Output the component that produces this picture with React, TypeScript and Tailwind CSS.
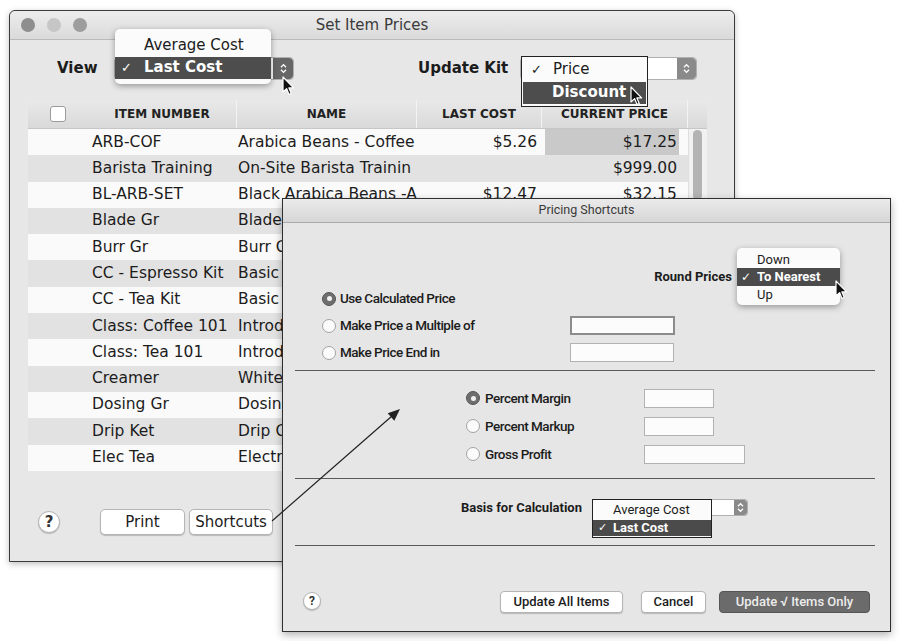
import React from 'react';

type Row = { num: string; name: string; cost: string; price: string };

const rows: Row[] = [
  { num: 'ARB-COF', name: 'Arabica Beans - Coffee', cost: '$5.26', price: '$17.25' },
  { num: 'Barista Training', name: 'On-Site Barista Trainin', cost: '', price: '$999.00' },
  { num: 'BL-ARB-SET', name: 'Black Arabica Beans -A', cost: '$12.47', price: '$32.15' },
  { num: 'Blade Gr', name: 'Blade Grinder', cost: '', price: '' },
  { num: 'Burr Gr', name: 'Burr Grinder', cost: '', price: '' },
  { num: 'CC - Espresso Kit', name: 'Basic Espresso', cost: '', price: '' },
  { num: 'CC - Tea Kit', name: 'Basic Tea Kit', cost: '', price: '' },
  { num: 'Class: Coffee 101', name: 'Introduction', cost: '', price: '' },
  { num: 'Class: Tea 101', name: 'Introduction', cost: '', price: '' },
  { num: 'Creamer', name: 'White Creamer', cost: '', price: '' },
  { num: 'Dosing Gr', name: 'Dosing Grinder', cost: '', price: '' },
  { num: 'Drip Ket', name: 'Drip Coffee Kettle', cost: '', price: '' },
  { num: 'Elec Tea', name: 'Electric Tea Kettle', cost: '', price: '' },
];

const Cursor = ({ className }: { className: string }) => (
  <svg className={`absolute pointer-events-none ${className}`} width="13" height="20" viewBox="0 0 13 20">
    <path
      d="M1 1 L1 16 L4.6 12.6 L7 18.4 L9.3 17.5 L6.9 11.9 L11.6 11.9 Z"
      fill="#111"
      stroke="#fff"
      strokeWidth="1.2"
      strokeLinejoin="round"
    />
  </svg>
);

const Stepper = ({ className }: { className: string }) => (
  <div className={`flex items-center justify-center ${className}`}>
    <svg width="7" height="11" viewBox="0 0 7 11">
      <path d="M1 4.2 L3.5 1.6 L6 4.2 M1 6.8 L3.5 9.4 L6 6.8" stroke="#fff" strokeWidth="1.3" fill="none" />
    </svg>
  </div>
);

const Radio = ({ on }: { on?: boolean }) =>
  on ? (
    <div className="w-[14px] h-[14px] rounded-full bg-[#6e6e6e] border border-[#555] flex items-center justify-center shrink-0">
      <div className="w-[5px] h-[5px] rounded-full bg-[#f2f2f2]" />
    </div>
  ) : (
    <div className="w-[14px] h-[14px] rounded-full bg-[#fbfbfb] border border-[#a2a2a2] shrink-0" />
  );

const HelpButton = ({ className }: { className: string }) => (
  <div
    className={`rounded-full bg-white border border-[#b4b4b4] shadow-[0_1px_1px_rgba(0,0,0,0.2)] flex items-center justify-center font-bold text-[#333] shrink-0 ${className}`}
  >
    ?
  </div>
);

function MainWindow() {
  return (
    <div className="absolute left-[9px] top-[10px] w-[726px] h-[552px] border border-[#3b3b3b] bg-[#e7e7e7] rounded-t-[6px] font-['DejaVu_Sans',sans-serif] text-[#1c1c1c] shadow-[0_2px_6px_rgba(0,0,0,0.25)]">
      {/* title bar */}
      <div className="h-[29px] flex items-center border-b border-[#bababa] bg-linear-to-b from-[#ededed] to-[#dadada] rounded-t-[6px]">
        <div className="w-[100px] flex items-center gap-[12px] pl-[11px]">
          <div className="w-[14px] h-[14px] rounded-full bg-[#8e8e8e]" />
          <div className="w-[14px] h-[14px] rounded-full bg-[#c6c6c6]" />
          <div className="w-[14px] h-[14px] rounded-full bg-[#9d9d9d]" />
        </div>
        <div className="flex-1 text-center text-[15px] text-[#3a3a3a]">Set Item Prices</div>
        <div className="w-[100px]" />
      </div>

      {/* controls */}
      <div className="h-[56px] flex items-center pl-[47px]">
        <div className="w-[57px] text-[15px] font-bold">View</div>
        <div className="relative w-[180px] h-[23px] bg-white border border-[#b0b0b0] rounded-[4px] flex justify-end">
          <Stepper className="w-[20px] h-full bg-[#666] rounded-r-[4px]" />
          <div className="absolute left-0 top-[-29px] w-[156px] h-[55px] bg-[#fbfbfb] rounded-[5px] shadow-[0_2px_6px_rgba(0,0,0,0.35)] pt-[5px] text-[15px]">
            <div className="h-[23px] flex items-center pl-[29px]">Average Cost</div>
            <div className="h-[22px] flex items-center bg-[#4d4d4d] text-white font-bold pl-[6px]">
              <span className="w-[23px] text-[13px]">✓</span>
              Last Cost
            </div>
          </div>
          <Cursor className="left-[167px] top-[18px]" />
        </div>
        <div className="ml-[124px] w-[102px] text-[15px] font-bold whitespace-nowrap">Update Kit</div>
        <div className="relative w-[177px] h-[23px] bg-white border border-[#b0b0b0] rounded-[4px] flex justify-end">
          <Stepper className="w-[19px] h-full bg-[#8a8a8a] rounded-r-[4px]" />
          <div className="absolute left-0 top-[-2px] w-[127px] h-[51px] bg-[#fbfbfb] border border-[#222] p-[1px] text-[15px]">
            <div className="h-[24px] flex items-center pl-[8px]">
              <span className="w-[22px] text-[13px]">✓</span>
              Price
            </div>
            <div className="h-[22px] flex items-center bg-[#4d4d4d] text-white font-bold pl-[29px]">Discount</div>
          </div>
          <Cursor className="left-[109px] top-[28px]" />
        </div>
      </div>

      {/* table */}
      <div className="mt-[4px] ml-[18px] w-[679px]">
        <div className="grid grid-cols-[60px_149px_180px_125px_146px_19px] h-[29px] bg-linear-to-b from-[#e9e9e9] to-[#d9d9d9] border-b border-[#c6c6c6] text-[12px] font-bold text-[#222]">
          <div className="flex items-center justify-center">
            <div className="w-[16px] h-[16px] bg-white border border-[#9c9c9c] rounded-[3px]" />
          </div>
          <div className="flex items-center justify-center border-r border-[#f3f3f3]">ITEM NUMBER</div>
          <div className="flex items-center justify-center border-r border-[#f3f3f3]">NAME</div>
          <div className="flex items-center justify-center border-r border-[#f3f3f3]">LAST COST</div>
          <div className="flex items-center justify-center border-r border-[#f3f3f3]">CURRENT PRICE</div>
          <div />
        </div>
        <div className="flex">
          <div className="w-[660px]">
            {rows.map((r, i) => (
              <div
                key={r.num}
                className={`grid grid-cols-[60px_149px_180px_125px_146px] h-[26.3px] text-[15.5px] whitespace-nowrap ${
                  i % 2 === 0 ? 'bg-[#fafafa]' : 'bg-[#e2e2e2]'
                }`}
              >
                <div />
                <div className="flex items-center pl-[4px] overflow-hidden">{r.num}</div>
                <div className="flex items-center pl-[1px] overflow-hidden">{r.name}</div>
                <div className="flex items-center justify-end pr-[5px]">{r.cost}</div>
                <div className="flex items-center pl-[3px] pr-[9px]">
                  <div
                    className={`w-full h-full flex items-center justify-end pr-[2px] ${i === 0 ? 'bg-[#c9c9c9]' : ''}`}
                  >
                    {r.price}
                  </div>
                </div>
              </div>
            ))}
          </div>
          <div className="w-[19px] bg-[#f1f1f1] border-l border-[#dedede]">
            <div className="mt-[1px] ml-[4px] w-[9px] h-[70px] rounded-full bg-[#b3b3b3]" />
          </div>
        </div>
      </div>

      {/* bottom buttons */}
      <div className="mt-[38px] flex items-center pl-[28px] text-[15px]">
        <HelpButton className="w-[22px] h-[22px] text-[15px]" />
        <div className="ml-[40px] w-[85px] h-[26px] bg-white border border-[#b5b5b5] rounded-[5px] shadow-[0_1px_1px_rgba(0,0,0,0.2)] flex items-center justify-center">
          Print
        </div>
        <div className="ml-[4px] w-[84px] h-[26px] bg-white border border-[#b5b5b5] rounded-[5px] shadow-[0_1px_1px_rgba(0,0,0,0.2)] flex items-center justify-center">
          Shortcuts
        </div>
      </div>
    </div>
  );
}

function TextField({ className }: { className: string }) {
  return <div className={`h-[19px] bg-[#fcfcfc] border border-[#b2b2b2] ${className}`} />;
}

function PricingWindow() {
  return (
    <div className="absolute left-[282px] top-[198px] w-[609px] h-[434px] border border-[#2f2f2f] bg-[#e6e6e6] font-['Roboto',sans-serif] text-[13px] font-medium text-[#1c1c1c] shadow-[0_3px_8px_rgba(0,0,0,0.3)] flex flex-col">
      <div className="h-[24px] shrink-0 flex items-center justify-center border-b border-[#a9a9a9] bg-linear-to-b from-[#ebebeb] to-[#d6d6d6] text-[12.5px] font-normal text-[#3a3a3a]">
        Pricing Shortcuts
      </div>

      {/* rounding section */}
      <div className="h-[147px] shrink-0 flex flex-col pt-[45px]">
        <div className="h-[17px] flex items-center justify-end pr-[50px] whitespace-nowrap">
          <span className="font-bold mr-[5px]">Round Prices</span>
          <div className="relative w-[103px] h-[17px] bg-white rounded-[4px]">
            <div className="absolute left-0 top-[-20px] w-[103px] h-[57px] bg-[#fbfbfb] rounded-[5px] shadow-[0_2px_6px_rgba(0,0,0,0.35)] pt-[3px] font-normal">
              <div className="h-[17px] flex items-center pl-[20px]">Down</div>
              <div className="h-[18px] flex items-center bg-[#4b4b4b] text-white font-bold pl-[4px]">
                <span className="w-[16px] font-['DejaVu_Sans',sans-serif] text-[12px]">✓</span>
                To Nearest
              </div>
              <div className="h-[17px] flex items-center pl-[20px]">Up</div>
            </div>
            <Cursor className="left-[98px] top-[12px]" />
          </div>
        </div>
        <div className="pl-[39px] text-[13.5px] tracking-[-0.5px]">
          <div className="h-[27px] flex items-center">
            <Radio on />
            <span className="ml-[4px]">Use Calculated Price</span>
          </div>
          <div className="h-[27px] flex items-center">
            <Radio />
            <span className="ml-[4px] w-[230px]">Make Price a Multiple of</span>
            <div className="h-[19px] w-[105px] bg-[#fcfcfc] border-2 border-[#8c8c8c]" />
          </div>
          <div className="h-[27px] flex items-center">
            <Radio />
            <span className="ml-[4px] w-[230px]">Make Price End in</span>
            <TextField className="w-[104px]" />
          </div>
        </div>
      </div>

      <div className="h-px shrink-0 bg-[#5a5a5a] ml-[12px] mr-[15px]" />

      {/* calculation section */}
      <div className="h-[107px] shrink-0 pt-[13px] pl-[183px] text-[13.5px] tracking-[-0.5px]">
        <div className="h-[28px] flex items-center">
          <Radio on />
          <span className="ml-[5px] w-[159px]">Percent Margin</span>
          <TextField className="w-[70px]" />
        </div>
        <div className="h-[28px] flex items-center">
          <Radio />
          <span className="ml-[5px] w-[159px]">Percent Markup</span>
          <TextField className="w-[70px]" />
        </div>
        <div className="h-[28px] flex items-center">
          <Radio />
          <span className="ml-[5px] w-[159px]">Gross Profit</span>
          <TextField className="w-[101px]" />
        </div>
      </div>

      <div className="h-px shrink-0 bg-[#5a5a5a] ml-[12px] mr-[15px]" />

      {/* basis section */}
      <div className="h-[66px] shrink-0 pt-[20px] pr-[142px] flex justify-end items-start">
        <div className="h-[17px] flex items-center whitespace-nowrap">
          <span className="font-bold mr-[10px]">Basis for Calculation</span>
          <div className="relative w-[156px] h-[17px] bg-white border border-[#b0b0b0] rounded-[3px] flex justify-end">
            <Stepper className="w-[13px] h-full bg-[#8a8a8a] rounded-r-[3px]" />
            <div className="absolute left-[-1px] top-[-1px] w-[120px] h-[39px] bg-[#fbfbfb] border border-[#222] font-normal">
              <div className="h-[20px] flex items-center pl-[20px]">Average Cost</div>
              <div className="h-[16px] flex items-center bg-[#4b4b4b] text-white font-bold pl-[5px]">
                <span className="w-[15px] font-['DejaVu_Sans',sans-serif] text-[11px]">✓</span>
                Last Cost
              </div>
            </div>
          </div>
        </div>
      </div>

      <div className="h-px shrink-0 bg-[#5a5a5a] ml-[12px] mr-[15px]" />

      {/* buttons */}
      <div className="flex-1 pt-[45px] px-[20px] flex items-start whitespace-nowrap">
        <HelpButton className="w-[18px] h-[18px] text-[12px] mt-[1px]" />
        <div className="flex-1" />
        <div className="w-[123px] h-[22px] bg-white border border-[#b5b5b5] rounded-[4px] shadow-[0_1px_1px_rgba(0,0,0,0.2)] flex items-center justify-center">
          Update All Items
        </div>
        <div className="ml-[18px] w-[65px] h-[22px] bg-white border border-[#b5b5b5] rounded-[4px] shadow-[0_1px_1px_rgba(0,0,0,0.2)] flex items-center justify-center">
          Cancel
        </div>
        <div className="ml-[13px] w-[151px] h-[22px] bg-[#6b6b6b] border border-[#555] rounded-[4px] text-[#ececec] flex items-center justify-center">
          Update √ Items Only
        </div>
      </div>
    </div>
  );
}

export default function App() {
  return (
    <div className="relative w-[900px] h-[641px] bg-white overflow-hidden">
      <MainWindow />
      <PricingWindow />
      <svg className="absolute left-0 top-0 pointer-events-none" width="900" height="641" viewBox="0 0 900 641">
        <line x1="272" y1="521" x2="392" y2="416" stroke="#222" strokeWidth="1.2" />
        <polygon points="400,409 394.3,420.8 387.7,413.2" fill="#222" />
      </svg>
    </div>
  );
}
